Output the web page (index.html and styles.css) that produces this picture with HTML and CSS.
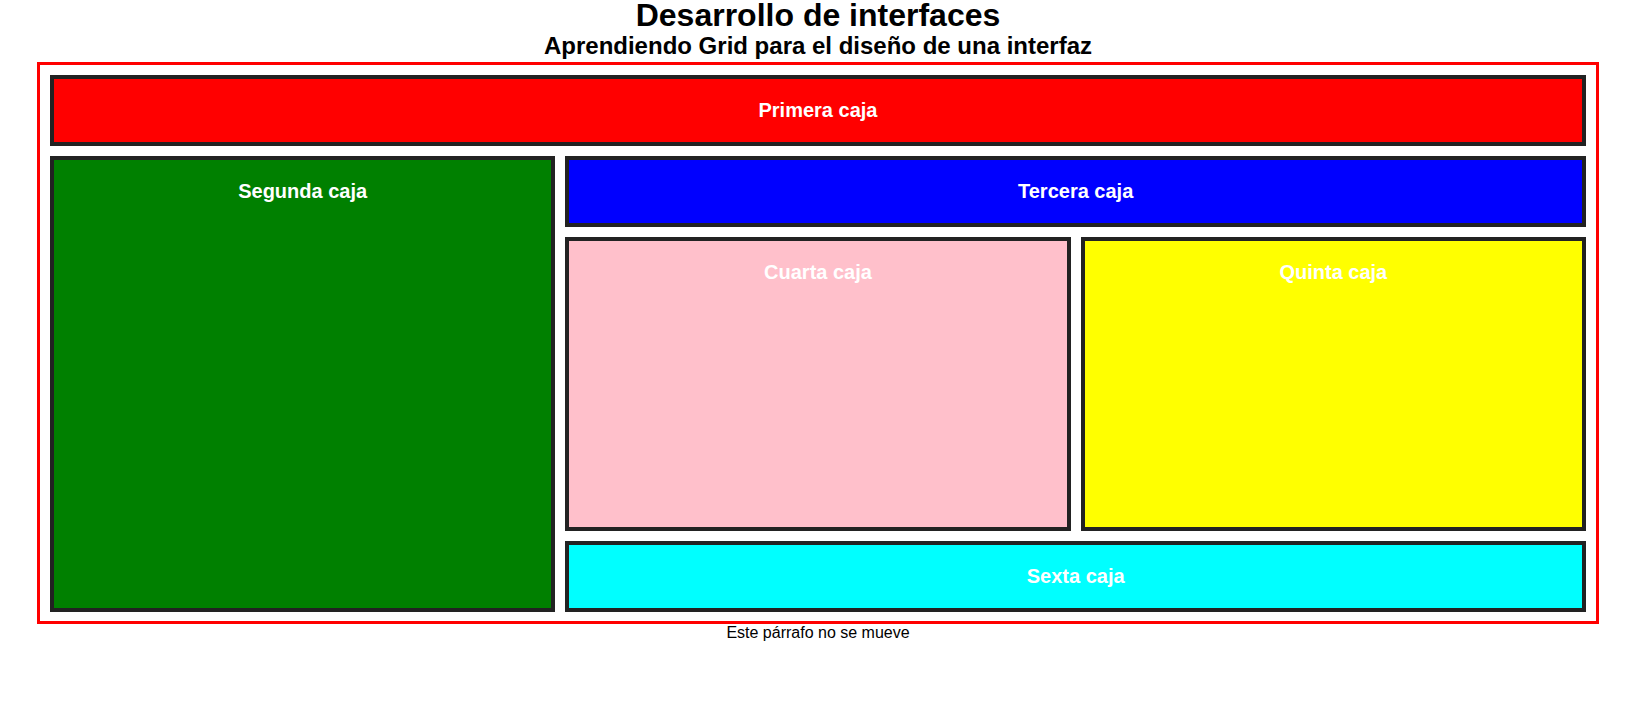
FILE: index.html
```html
<!DOCTYPE html>
<html lang="es">
<head>
    <meta charset="UTF-8">
    <meta name="viewport" content="width=device-width, initial-scale=1.0">
    <title>Desarrollo de interfaces</title>
    <link rel="stylesheet" href="styles.css">
</head>
<body>
    <header class="cabecera">
        <h1 class="titulo">Desarrollo de interfaces</h1>
        <h2 class="subtitulo">Aprendiendo Grid para el diseño de una interfaz</h2>
    </header>

    <!-- Contenedor del grid -->
    <div class="contenedor">
        <div class="caja caja1">Primera caja</div>
        <div class="caja caja2">Segunda caja</div>
        <div class="caja caja3">Tercera caja</div>
        <div class="caja caja4">Cuarta caja</div>
        <div class="caja caja5">Quinta caja</div>
        <div class="caja caja6">Sexta caja</div>
    </div>

    <p class="parrafo">Este párrafo no se mueve</p>
</body>
</html>
```

FILE: styles.css
```css
body {
    margin: 0;
    font-family: "Liberation Sans", Arial, sans-serif;
}

.cabecera {
    width: 1562px;
    margin-left: 37px;
    text-align: center;
}

.titulo {
    margin: 0;
    font-size: 32px;
    line-height: 30px;
}

.subtitulo {
    margin: 0;
    font-size: 24px;
    line-height: 32px;
}

/* Grid principal */
.contenedor {
    display: grid;
    grid-template-columns: repeat(3, 1fr);
    grid-template-rows: auto auto 294px auto;
    grid-template-areas:
        "uno uno uno"
        "dos tres tres"
        "dos cuatro cinco"
        "dos seis seis";
    gap: 10px;
    width: 1536px;
    margin-left: 37px;
    padding: 10px 10px 9px 10px;
    border: 3px solid red;
}

.caja {
    border: 4px solid #222;
    padding: 20px;
    color: white;
    font-size: 20px;
    font-weight: bold;
    text-align: center;
}

.caja1 { grid-area: uno; background-color: red; }
.caja2 { grid-area: dos; background-color: green; }
.caja3 { grid-area: tres; background-color: blue; }
.caja4 { grid-area: cuatro; background-color: pink; }
.caja5 { grid-area: cinco; background-color: yellow; }
.caja6 { grid-area: seis; background-color: cyan; }

.parrafo {
    width: 1562px;
    margin: 0 0 0 37px;
    text-align: center;
    font-size: 16px;
}
```
